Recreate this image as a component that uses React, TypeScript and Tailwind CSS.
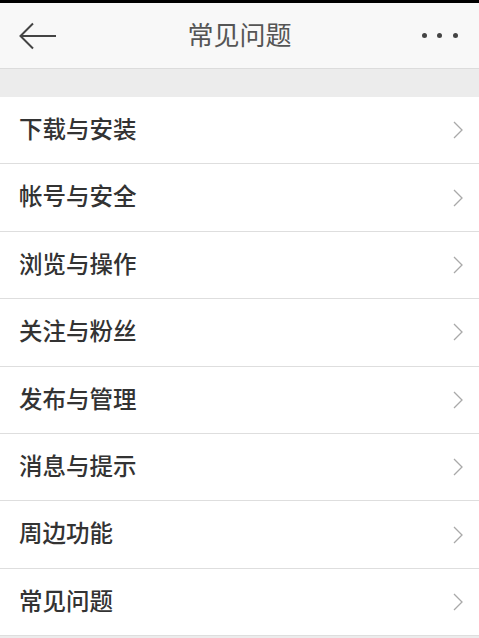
const items = [
  "下载与安装",
  "帐号与安全",
  "浏览与操作",
  "关注与粉丝",
  "发布与管理",
  "消息与提示",
  "周边功能",
  "常见问题",
];

function Chevron() {
  return (
    <svg width="12" height="18" viewBox="0 0 12 18" fill="none">
      <path d="M2 1 L10 9 L2 17" stroke="#a9a9a9" strokeWidth="1.3" />
    </svg>
  );
}

export default function App() {
  return (
    <div
      className="h-[638px] w-[479px] overflow-hidden bg-[#ececec]"
      style={{ fontFamily: '"Noto Sans CJK SC", "Noto Sans", sans-serif' }}
    >
      <div className="h-[3px] bg-black" />
      <header className="flex h-[66px] items-center justify-between border-b border-[#dcdcdc] bg-[#f8f8f8] px-[19px]">
        <svg width="38" height="28" viewBox="0 0 38 28" fill="none">
          <path
            d="M14 1.5 L1.5 14 L14 26.5 M1.5 14 H37"
            stroke="#444"
            strokeWidth="2"
          />
        </svg>
        <h1 className="mb-[3px] text-[26px] leading-none text-[#555]">常见问题</h1>
        <div className="flex w-[38px] items-center justify-between pr-[2px]">
          <span className="h-[5px] w-[5px] rounded-full bg-[#444]" />
          <span className="h-[5px] w-[5px] rounded-full bg-[#444]" />
          <span className="h-[5px] w-[5px] rounded-full bg-[#444]" />
        </div>
      </header>
      <div className="h-[28px]" />
      <ul>
        {items.map((item) => (
          <li
            key={item}
            className="flex h-[67.4px] items-center justify-between border-b border-[#dedede] bg-white pr-[15px] pl-[19px]"
          >
            <span className="mb-[3px] text-[23.5px] leading-none font-medium text-[#333]">
              {item}
            </span>
            <Chevron />
          </li>
        ))}
      </ul>
    </div>
  );
}
